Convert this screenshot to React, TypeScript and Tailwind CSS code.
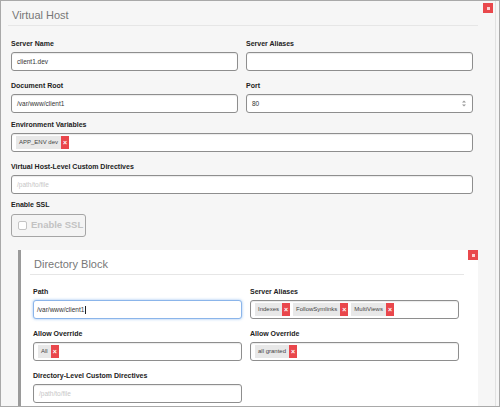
import React from 'react';

const Label = ({ text, className = '' }: { text: string; className?: string }) => (
  <div className={`h-[9px] text-[7px] font-bold leading-[9px] text-[#222] ${className || 'mb-[4px]'}`}>{text}</div>
);

const TextBox = ({ value, placeholder, focused }: { value?: string; placeholder?: string; focused?: boolean }) => (
  <div
    className={`flex h-[19px] items-center rounded-[3px] border bg-white text-[6.5px] ${
      focused
        ? 'border-[#8bb5ea] pl-[3px] shadow-[0_0_3px_rgba(80,150,230,0.6)]'
        : 'border-[#8e8e8e] pl-[5px] shadow-[inset_0_1px_1px_rgba(0,0,0,0.08)]'
    }`}
  >
    {value ? (
      <span className="text-[#333]">{value}</span>
    ) : (
      <span className="text-[#c6c6c6]">{placeholder}</span>
    )}
    {focused && <span className="ml-[1px] h-[8px] w-px bg-[#222]" />}
  </div>
);

const Tag = ({ label }: { label: string }) => (
  <span className="flex h-[13px] items-stretch">
    <span className="flex items-center bg-[#e8e8e8] px-[3px] text-[6px] text-[#444]">{label}</span>
    <span className="flex w-[8px] items-center justify-center bg-[#e9474c] text-[7px] font-bold leading-none text-white">×</span>
  </span>
);

const TagBox = ({ tags }: { tags: string[] }) => (
  <div className="flex h-[19px] items-center gap-[3px] rounded-[3px] border border-[#8e8e8e] bg-white pl-[4px] shadow-[inset_0_1px_1px_rgba(0,0,0,0.08)]">
    {tags.map(t => <Tag key={t} label={t} />)}
  </div>
);

const CloseBtn = ({ className }: { className: string }) => (
  <button className={`absolute flex h-[10px] w-[10px] items-center justify-center bg-[#e9484c] ${className}`}>
    <span className="block h-[3px] w-[3px] bg-[#fbd3d4]" />
  </button>
);

const Heading = ({ text }: { text: string }) => (
  <div className="-ml-[3px] -mr-[5px] border-b border-[#e6e6e6] pb-[3px] pl-[4px] pt-[7px] text-[11px] leading-[14px] text-[#777]">
    {text}
  </div>
);

const App: React.FC = () => {
  return (
    <div className="h-[407px] w-[500px] overflow-hidden border border-[#a9a9a9] bg-[#f6f6f6] font-['Liberation_Sans',Arial,sans-serif]">
      <div className="relative h-full w-[495px] border-r border-[#e2e2e2] pl-[10px] pr-[22px]">
        <Heading text="Virtual Host" />
        <CloseBtn className="right-[2px] top-[2px]" />

        {/* Virtual host fields */}
        <div className="mt-[13px] grid grid-cols-2 gap-x-[8px]">
          <div className="mb-[10px]">
            <Label text="Server Name" />
            <TextBox value="client1.dev" />
          </div>
          <div className="mb-[10px]">
            <Label text="Server Aliases" />
            <TextBox />
          </div>
          <div className="mb-[7px]">
            <Label text="Document Root" />
            <TextBox value="/var/www/client1" />
          </div>
          <div className="mb-[7px]">
            <Label text="Port" />
            <div className="flex h-[19px] items-center justify-between rounded-[3px] border border-[#8e8e8e] bg-white pl-[5px] pr-[6px] text-[6.5px] text-[#333] shadow-[inset_0_1px_1px_rgba(0,0,0,0.08)]">
              <span>80</span>
              <svg width="4" height="7" viewBox="0 0 4 7">
                <path d="M0 2.5 L2 0.5 L4 2.5 Z" fill="#9a9a9a" />
                <path d="M0 4.5 L2 6.5 L4 4.5 Z" fill="#9a9a9a" />
              </svg>
            </div>
          </div>
          <div className="col-span-2 mb-[10px]">
            <Label text="Environment Variables" />
            <TagBox tags={['APP_ENV dev']} />
          </div>
          <div className="col-span-2 mb-[6px]">
            <Label text="Virtual Host-Level Custom Directives" />
            <TextBox placeholder="/path/to/file" />
          </div>
          <div className="col-span-2">
            <Label text="Enable SSL" className="mb-[5px]" />
            <button className="flex h-[23px] w-[75px] items-center gap-[4px] rounded-[3px] border border-[#a5a5a5] bg-[#f4f4f4] pl-[6px]">
              <span className="h-[9px] w-[9px] rounded-[2px] border border-[#c4c4c4] bg-white" />
              <span className="text-[9.5px] font-bold text-[#c2c2c2]">Enable SSL</span>
            </button>
          </div>
        </div>

        {/* Directory block */}
        <div className="relative ml-[7px] mt-[13px] w-[460px] border-l-[3px] border-[#9a9a9a] bg-white pb-[10px] pl-[12px] pr-[19px]">
          <Heading text="Directory Block" />
          <CloseBtn className="right-0 top-0" />
          <div className="mt-[12px] grid grid-cols-2 gap-x-[8px]">
            <div className="mb-[10px]">
              <Label text="Path" />
              <TextBox value="/var/www/client1" focused />
            </div>
            <div className="mb-[10px]">
              <Label text="Server Aliases" />
              <TagBox tags={['Indexes', 'FollowSymlinks', 'MultiViews']} />
            </div>
            <div className="mb-[10px]">
              <Label text="Allow Override" />
              <TagBox tags={['All']} />
            </div>
            <div className="mb-[10px]">
              <Label text="Allow Override" />
              <TagBox tags={['all granted']} />
            </div>
            <div>
              <Label text="Directory-Level Custom Directives" />
              <TextBox placeholder="/path/to/file" />
            </div>
          </div>
        </div>
      </div>
    </div>
  );
};

export default App;
